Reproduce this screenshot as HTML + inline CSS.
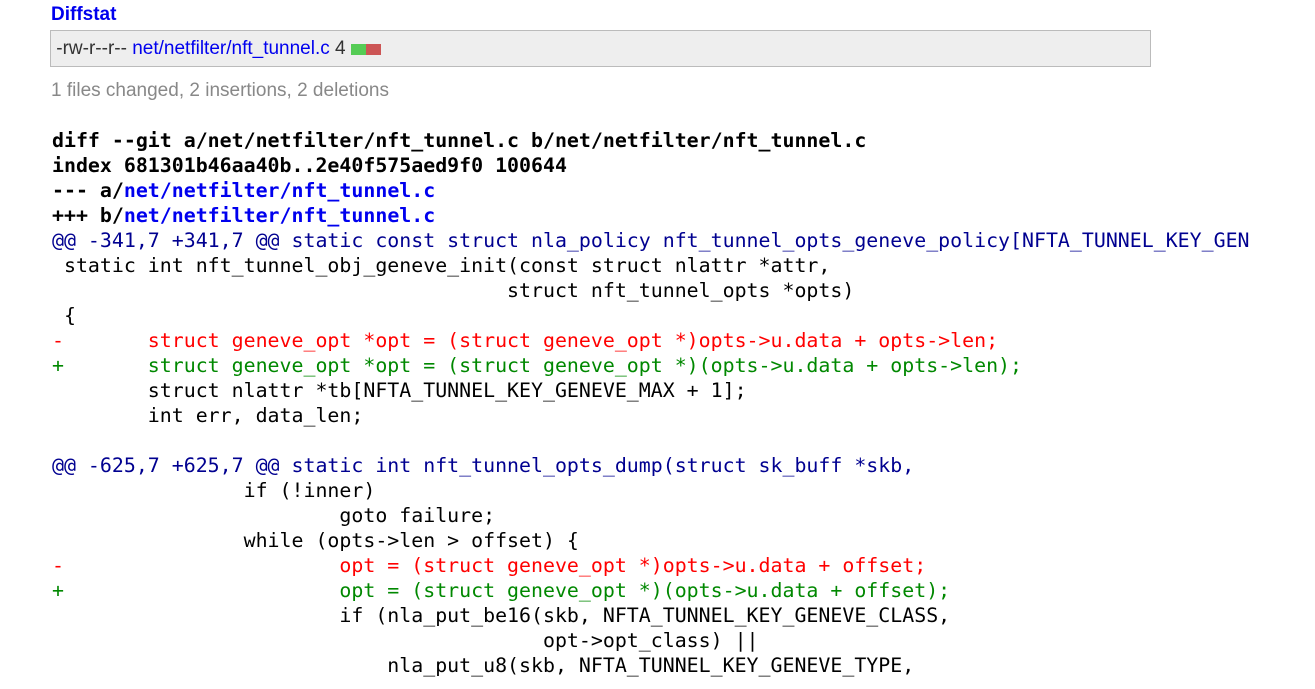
<!DOCTYPE html><html><head><style>
body{margin:0;background:#fff;font-family:"Liberation Sans",sans-serif;}
.h{position:absolute;left:51px;top:4px;font-size:19px;font-weight:bold;color:#0000ee;}
.box{position:absolute;left:50px;top:30px;width:1099px;height:35px;background:#eee;border:1px solid #bbb;font-size:19px;line-height:35px;color:#333;}
.box a{color:#0000ee;}
.sum{position:absolute;left:51px;top:80px;font-size:19px;color:#888;}
pre{position:absolute;left:52px;top:128px;margin:0;font-family:"DejaVu Sans Mono","Liberation Mono",monospace;font-size:19.9px;line-height:25px;color:#000;}
b{font-weight:bold}.l{color:#0000ee}.u{color:#000090}.d{color:#f00}.a{color:#080}
</style></head><body>
<div class="h">Diffstat</div>
<div class="box">&nbsp;-rw-r--r-- <a>net/netfilter/nft_tunnel.c</a> 4 <span style="display:inline-block;width:15px;height:11px;background:#5c5;vertical-align:-1px"></span><span style="display:inline-block;width:15px;height:11px;background:#c55;vertical-align:-1px"></span></div>
<div class="sum">1 files changed, 2 insertions, 2 deletions</div>
<pre><b>diff --git a/net/netfilter/nft_tunnel.c b/net/netfilter/nft_tunnel.c
index 681301b46aa40b..2e40f575aed9f0 100644
--- a/<span class="l">net/netfilter/nft_tunnel.c</span>
+++ b/<span class="l">net/netfilter/nft_tunnel.c</span></b>
<span class="u">@@ -341,7 +341,7 @@ static const struct nla_policy nft_tunnel_opts_geneve_policy[NFTA_TUNNEL_KEY_GEN</span>
 static int nft_tunnel_obj_geneve_init(const struct nlattr *attr,
                                      struct nft_tunnel_opts *opts)
 {
<span class="d">-       struct geneve_opt *opt = (struct geneve_opt *)opts->u.data + opts->len;</span>
<span class="a">+       struct geneve_opt *opt = (struct geneve_opt *)(opts->u.data + opts->len);</span>
        struct nlattr *tb[NFTA_TUNNEL_KEY_GENEVE_MAX + 1];
        int err, data_len;

<span class="u">@@ -625,7 +625,7 @@ static int nft_tunnel_opts_dump(struct sk_buff *skb,</span>
                if (!inner)
                        goto failure;
                while (opts->len > offset) {
<span class="d">-                       opt = (struct geneve_opt *)opts->u.data + offset;</span>
<span class="a">+                       opt = (struct geneve_opt *)(opts->u.data + offset);</span>
                        if (nla_put_be16(skb, NFTA_TUNNEL_KEY_GENEVE_CLASS,
                                         opt->opt_class) ||
                            nla_put_u8(skb, NFTA_TUNNEL_KEY_GENEVE_TYPE,
</pre>
</body></html>
